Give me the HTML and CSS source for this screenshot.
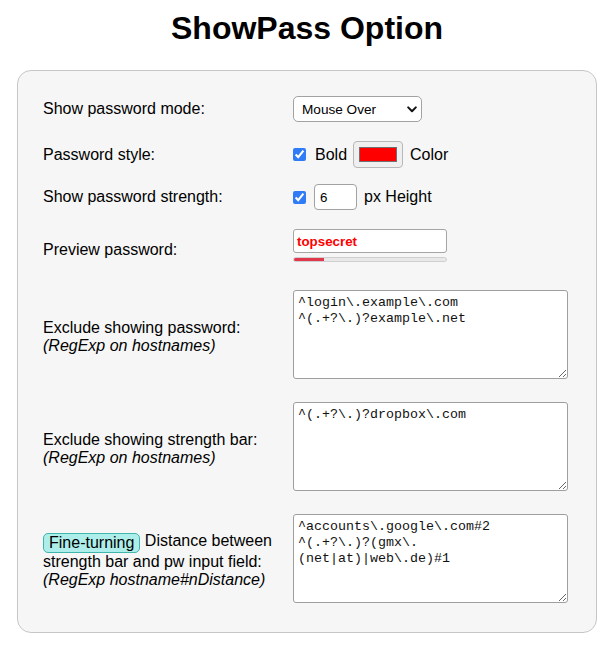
FILE: index.html
```html
<!DOCTYPE html>
<html lang="en">
<head>
<meta charset="utf-8">
<title>ShowPass Option</title>
<link rel="stylesheet" href="styles.css">
</head>
<body>
<h1 class="title">ShowPass Option</h1>
<div class="card">
  <div class="row">
    <div class="label">Show password mode:</div>
    <div class="control">
      <span class="select-wrap">
        <select class="select">
          <option>Mouse Over</option>
          <option>Double Click</option>
          <option>Focus</option>
          <option>Always</option>
        </select>
        <svg class="chevron" width="10" height="7" viewBox="0 0 10 7"><path d="M1.2 1.4 L5 5.2 L8.8 1.4" fill="none" stroke="#111" stroke-width="2" stroke-linecap="round" stroke-linejoin="round"/></svg>
      </span>
    </div>
  </div>
  <div class="row">
    <div class="label">Password style:</div>
    <div class="control inline">
      <input type="checkbox" class="check" checked>
      <span class="txt-bold">Bold</span>
      <input type="color" class="color" value="#ff0000">
      <span class="txt-color">Color</span>
    </div>
  </div>
  <div class="row row-tight">
    <div class="label">Show password strength:</div>
    <div class="control inline">
      <input type="checkbox" class="check" checked>
      <input type="number" class="num" value="6">
      <span class="txt-px">px Height</span>
    </div>
  </div>
  <div class="row">
    <div class="label">Preview password:</div>
    <div class="control preview">
      <input type="text" class="pw" value="topsecret">
      <div class="bar"><div class="bar-fill" style="width: 20%"></div></div>
    </div>
  </div>
  <div class="row">
    <div class="label">Exclude showing password:<br><i>(RegExp on hostnames)</i></div>
    <div class="control"><textarea class="area">^login\.example\.com
^(.+?\.)?example\.net</textarea></div>
  </div>
  <div class="row">
    <div class="label">Exclude showing strength bar:<br><i>(RegExp on hostnames)</i></div>
    <div class="control"><textarea class="area">^(.+?\.)?dropbox\.com</textarea></div>
  </div>
  <div class="row">
    <div class="label"><button class="fine">Fine-turning</button> Distance between strength bar and pw input field:<br><i>(RegExp hostname#nDistance)</i></div>
    <div class="control"><textarea class="area">^accounts\.google\.com#2
^(.+?\.)?(gmx\.
(net|at)|web\.de)#1</textarea></div>
  </div>
</div>
</body>
</html>
```

FILE: styles.css
```css
html, body {
  background: #ffffff;
}
body {
  margin: 8px;
  font-family: "Liberation Sans", Arial, sans-serif;
  font-size: 16px;
  color: #000;
}
.title {
  margin: 2px 0 23px;
  text-align: center;
  font-size: 32px;
  font-weight: bold;
  line-height: 37px;
}
.card {
  margin: 0 9px;
  background: #f6f6f6;
  border: 1px solid #c6c6c6;
  border-radius: 14px;
  padding: 25px 25px 25px 25px;
  display: flex;
  flex-direction: column;
  gap: 19px;
}
.row {
  display: grid;
  grid-template-columns: 250px 1fr;
  align-items: center;
}
.row-tight {
  margin-top: -3px;
}
.label {
  line-height: 18px;
}
.control {
  min-width: 0;
}
.inline {
  display: flex;
  align-items: center;
}
.select-wrap {
  position: relative;
  display: inline-block;
  width: 129px;
  height: 26px;
  vertical-align: top;
}
.select {
  -webkit-appearance: none;
  appearance: none;
  width: 129px;
  height: 26px;
  margin: 0;
  border: 1px solid #a2a2a2;
  border-radius: 5px;
  background: #fff;
  font-family: "Liberation Sans", Arial, sans-serif;
  font-size: 13.6px;
  color: #000;
  padding: 0 0 0 8px;
}
.chevron {
  position: absolute;
  right: 5px;
  top: 10px;
  pointer-events: none;
}
.check {
  margin: 0;
  width: 13px;
  height: 13px;
  accent-color: #2f7cf6;
}
.txt-bold {
  margin-left: 9px;
}
.color {
  margin: 0 0 0 6px;
  width: 50px;
  height: 27px;
  padding: 5px;
  border: 1px solid #b8b8b8;
  border-radius: 4px;
  background: #efefef;
  box-sizing: border-box;
}
.color::-webkit-color-swatch-wrapper {
  padding: 0;
}
.color::-webkit-color-swatch {
  border: 1px solid #6f6f6f;
  border-radius: 0;
}
.txt-color {
  margin-left: 7px;
}
.num {
  margin: 0 0 0 8px;
  width: 43px;
  height: 26px;
  box-sizing: border-box;
  border: 1px solid #a2a2a2;
  border-radius: 4px;
  padding: 0 0 0 5px;
  font-family: "Liberation Sans", Arial, sans-serif;
  font-size: 13.33px;
  background: #fff;
}
.txt-px {
  margin-left: 7px;
}
.preview {
  padding-bottom: 9px;
}
.pw {
  display: block;
  margin: 0;
  width: 154px;
  height: 24px;
  box-sizing: border-box;
  border: 1px solid #a5a5a5;
  border-radius: 3px;
  padding: 0 3px;
  font-family: "Liberation Sans", Arial, sans-serif;
  font-size: 13.33px;
  font-weight: bold;
  color: #ff0000;
  background: #fff;
}
.bar {
  margin-top: 4px;
  width: 154px;
  height: 5px;
  box-sizing: border-box;
  border: 1px solid #cfcfcf;
  border-radius: 3px;
  background: #e8e8e8;
  overflow: hidden;
}
.bar-fill {
  height: 100%;
  background: #e0374c;
}
.area {
  display: inline-block;
  margin: 0;
  width: 275px;
  height: 89px;
  box-sizing: border-box;
  border: 1px solid #9e9e9e;
  border-radius: 3px;
  padding: 4px 4px 2px;
  font-family: "Liberation Mono", "Courier New", monospace;
  font-size: 13.33px;
  line-height: 16px;
  color: #111;
  background: #fff;
  resize: both;
}
.fine {
  display: inline-block;
  height: 20px;
  margin: 0;
  padding: 0 5px;
  border: 1px solid #3fb5ac;
  border-radius: 5px;
  background: #aeeeea;
  font-family: "Liberation Sans", Arial, sans-serif;
  font-size: 16px;
  line-height: 18px;
  color: #000;
  vertical-align: -2px;
}
```
